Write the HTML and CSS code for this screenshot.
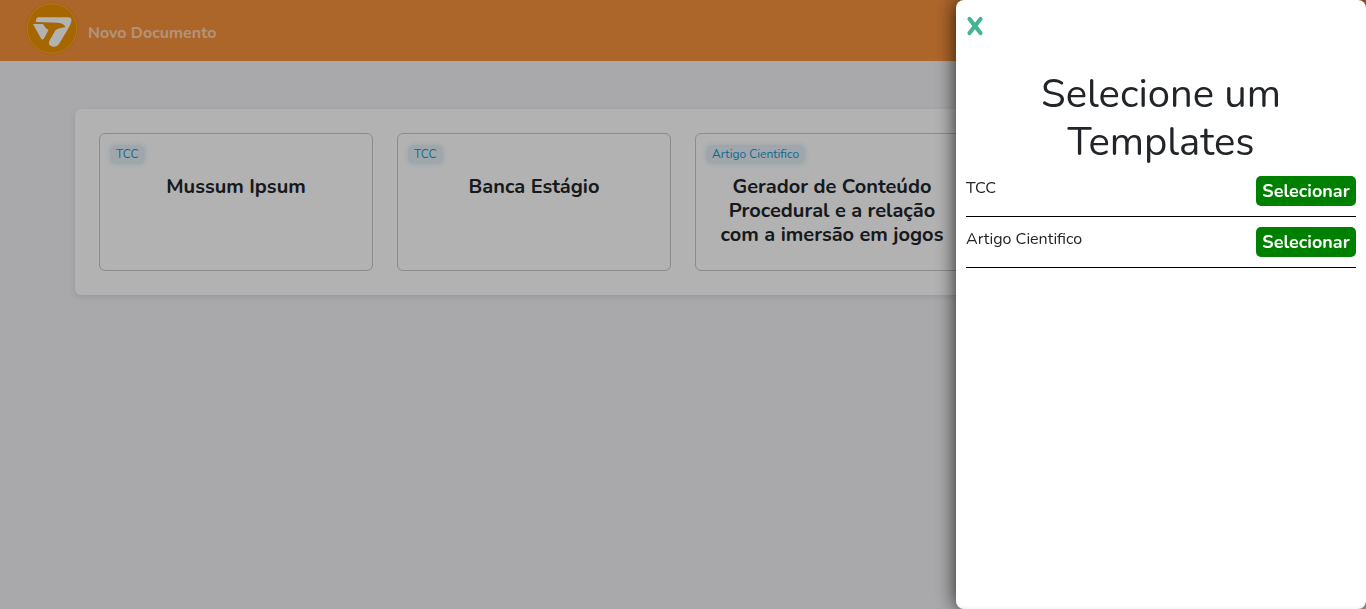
FILE: index.html
```html
<!DOCTYPE html>
<html lang="pt-BR">
<head>
<meta charset="utf-8">
<title>Novo Documento</title>
<link rel="stylesheet" href="styles.css">
</head>
<body>
<header class="topbar">
  <svg class="logo" viewBox="0 0 54 54">
    <circle cx="27" cy="26.500" r="26.300" fill="#ee8a20"/>
    <circle cx="27" cy="26.500" r="24.800" fill="#ee9200" stroke="#ffae30" stroke-width="1"/>
    <path d="M13 15.300H43Q47.500 15.300 46.200 20Q45.500 23 43 27L34 42Q32 45.500 27 44.500Q22.500 43 24.500 38.500L29.500 30Q30 27.500 33 26.800L40.500 25Q38.500 21.200 33 20.700L11 20Q10.500 16.500 13 15.300Z" fill="#fff"/>
    <path d="M8 22H18Q20 26 23.500 28L19 36.500Q17.500 38.500 16 36.500Z" fill="#fff"/>
  </svg>
  <a class="new-doc">Novo Documento</a>
</header>
<main class="panel">
  <article class="card">
    <span class="tag">TCC</span>
    <h5 class="card-title">Mussum Ipsum</h5>
  </article>
  <article class="card">
    <span class="tag">TCC</span>
    <h5 class="card-title">Banca Estágio</h5>
  </article>
  <article class="card">
    <span class="tag">Artigo Cientifico</span>
    <h5 class="card-title">Gerador de Conteúdo Procedural e a relação com a imersão em jogos</h5>
  </article>
</main>
<div class="overlay"></div>
<aside class="drawer">
  <button class="close" aria-label="Fechar">
    <svg class="close-icon" viewBox="0 0 18 20"><path d="M3.500 3L14.500 17M14.500 3L3.500 17"/></svg>
  </button>
  <h1 class="drawer-title">Selecione um Templates</h1>
  <div class="row"><span>TCC</span><button class="select">Selecionar</button></div>
  <div class="row"><span>Artigo Cientifico</span><button class="select">Selecionar</button></div>
</aside>
</body>
</html>
```
FILE: styles.css
```css
* { box-sizing: border-box; }
body {
  margin: 0;
  height: 609px;
  overflow: hidden;
  background: #f2f2f5;
  color: #212529;
  font-family: Nunito, Lato, "Open Sans", sans-serif;
  font-size: 16px;
  line-height: 24px;
}
.topbar {
  display: flex;
  align-items: flex-start;
  height: 61px;
  padding: 2px 25px;
  background: #f8923d;
}
.logo { width: 54px; height: 54px; flex: none; }
.new-doc {
  margin: 19px 0 0 9px;
  color: #ffd5b0;
  font-weight: 700;
}
.panel {
  display: grid;
  grid-template-columns: repeat(4, 274px);
  gap: 24px;
  width: 1216px;
  height: 186px;
  margin: 48px 75px 0;
  padding: 24px;
  background: #fff;
  border-radius: 6px;
  box-shadow: 0 2px 6px rgba(0, 0, 0, .1);
}
.card {
  height: 138px;
  padding: 11px 10px;
  border: 1px solid #c8c8c8;
  border-radius: 6px;
}
.tag {
  display: block;
  width: max-content;
  height: 19px;
  padding: 0 6px;
  border-radius: 6px;
  background: #e4f0f6;
  box-shadow: 0 0 5px 1px #e4f0f6;
  color: #1594cb;
  font-size: 12px;
  line-height: 19px;
}
.card-title {
  margin: 11px 0 0;
  padding: 0 10px;
  font-size: 20px;
  line-height: 24px;
  font-weight: 700;
  text-align: center;
}
.overlay {
  position: fixed;
  inset: 0;
  background: rgba(0, 0, 0, .3);
}
.drawer {
  position: fixed;
  top: 0;
  right: 0;
  width: 410px;
  height: 609px;
  padding: 10px;
  border-radius: 8px;
  background: #fff;
  box-shadow: 0 0 20px rgba(0, 0, 0, .8), inset 0 -4px 4px -3px rgba(0, 0, 0, .06);
}
.close {
  display: block;
  padding: 6px 0 0;
  border: 0;
  background: none;
}
.close-icon { display: block; width: 18px; height: 20px; }
.close-icon path { fill: none; stroke: #42b395; stroke-width: 4.2; stroke-linecap: round; }
.drawer-title {
  margin: 34px 0 10px;
  padding: 0 60px;
  font-size: 40px;
  line-height: 48px;
  font-weight: 400;
  text-align: center;
}
.row {
  display: flex;
  justify-content: space-between;
  align-items: flex-start;
  height: 41px;
  margin-bottom: 10px;
  border-bottom: 1px solid #000;
}
.select {
  width: 100px;
  height: 30px;
  padding: 0;
  border: 0;
  border-radius: 5px;
  background: #008000;
  color: #fff;
  font: 700 18px/30px Nunito, Lato, sans-serif;
}
```
